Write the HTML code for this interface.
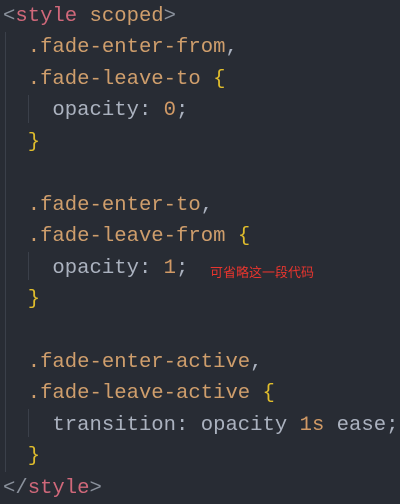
<!DOCTYPE html>
<html><head><style>
body{margin:0;background:#282c34;width:400px;height:499px;overflow:hidden}
pre{margin:0;padding:0 0 0 3px;font-family:"Liberation Mono",monospace;font-size:20.6px;line-height:31.45px;color:#abb2bf;position:relative;top:1px}
.t{color:#d0687a}.s{color:#cf9e6c}.b{color:#e0bd2c}.n{color:#d19a66}.g{color:#8a919c}
.cn{position:absolute;left:210px;top:262px;font-family:"Liberation Sans","Noto Sans CJK SC",sans-serif;font-size:13px;color:#e8352e}
.gl{position:absolute;width:1px;background:#3b404a}
</style></head><body>
<div class="gl" style="left:5px;top:32px;height:440px"></div>
<div class="gl" style="left:28px;top:95px;height:28px"></div>
<div class="gl" style="left:28px;top:252px;height:28px"></div>
<div class="gl" style="left:28px;top:409px;height:28px"></div>
<pre><span class="g">&lt;</span><span class="t">style</span> <span class="s">scoped</span><span class="g">&gt;</span>
  <span class="s">.fade-enter-from</span>,
  <span class="s">.fade-leave-to</span> <span class="b">{</span>
    opacity: <span class="n">0</span>;
  <span class="b">}</span>

  <span class="s">.fade-enter-to</span>,
  <span class="s">.fade-leave-from</span> <span class="b">{</span>
    opacity: <span class="n">1</span>;
  <span class="b">}</span>

  <span class="s">.fade-enter-active</span>,
  <span class="s">.fade-leave-active</span> <span class="b">{</span>
    transition: opacity <span class="n">1s</span> ease;
  <span class="b">}</span>
<span class="g">&lt;/</span><span class="t">style</span><span class="g">&gt;</span></pre>
<div class="cn">可省略这一段代码</div>
</body></html>
